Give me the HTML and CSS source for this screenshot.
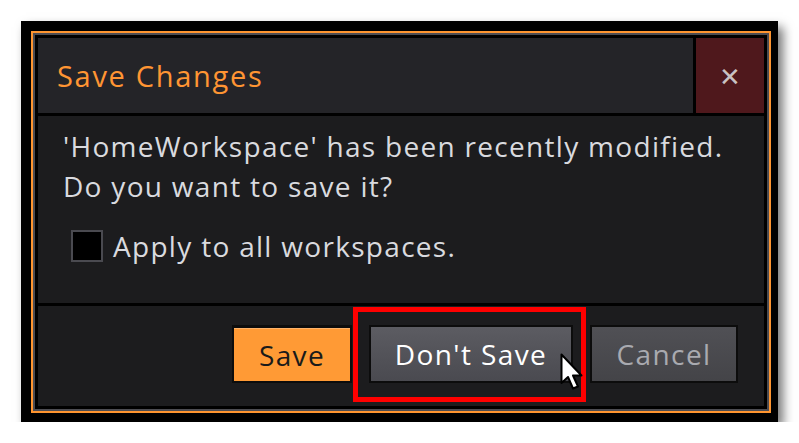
FILE: index.html
```html
<!DOCTYPE html>
<html lang="en">
<head>
    <meta charset="UTF-8">
    <title>Save Changes</title>
    <link rel="stylesheet" href="styles.css">
</head>
<body>
    <div class="frame">
        <div class="dialog">
            <div class="panels">
                <div class="header">
                    <div class="title">Save Changes</div>
                    <div class="close">&#x2715;</div>
                </div>
                <div class="content">
                    <p class="message">'HomeWorkspace' has been recently modified.<br>Do you want to save it?</p>
                    <label class="check">
                        <span class="box"></span>
                        <span>Apply to all workspaces.</span>
                    </label>
                </div>
                <div class="footer">
                    <button class="btn save">Save</button>
                    <button class="btn dont">Don't Save</button>
                    <button class="btn cancel">Cancel</button>
                    <div class="highlight"></div>
                    <svg class="cursor" width="24" height="38" viewBox="0 0 24 38">
                        <path d="M1.5 1.5 L1.5 30 L8 24 L13 35.5 L18 33.5 L13 22.5 L21.5 22.5 Z" fill="#fff" stroke="#000" stroke-width="2" stroke-linejoin="round"/>
                    </svg>
                </div>
            </div>
        </div>
    </div>
</body>
</html>
```

FILE: styles.css
```css
body {
    margin: 0;
    background: #fff;
    font-family: "Open Sans", Lato, sans-serif;
}
.frame {
    margin: 21px 0 0 21px;
    width: 757px;
    height: 401px;
    box-sizing: border-box;
    padding: 10px 7px 9px 10px;
    background: #000;
    box-shadow: 5px 6px 10px rgba(0, 0, 0, 0.55);
}
.dialog {
    height: 100%;
    box-sizing: border-box;
    border: 2px solid #ff9530;
}
.panels {
    height: 100%;
    box-sizing: border-box;
    border: 2px solid #4c4c52;
    padding: 3px;
    background: #000;
    display: flex;
    flex-direction: column;
    gap: 3px;
}
.header {
    height: 75px;
    display: flex;
    gap: 3px;
}
.title {
    flex: 1;
    background: #242428;
    color: #ff9533;
    font-size: 29px;
    letter-spacing: 1.7px;
    padding-left: 19px;
    display: flex;
    align-items: center;
}
.close {
    width: 68px;
    background: #4f181c;
    color: #c9c2c2;
    font-size: 26px;
    display: flex;
    align-items: center;
    justify-content: center;
}
.content {
    height: 187px;
    background: #1c1c1e;
    padding: 10px 0 0 25px;
    box-sizing: border-box;
    color: #d9dadf;
    font-size: 28px;
    letter-spacing: 1.3px;
}
.message {
    margin: 0;
    line-height: 40px;
}
.check {
    display: flex;
    align-items: center;
    gap: 10px;
    height: 36px;
    margin: 22px 0 0 8px;
}
.box {
    width: 28px;
    height: 28px;
    border: 2px solid #4a4a50;
    background: #000;
}
.footer {
    flex: 1;
    position: relative;
    background: #1c1c1e;
    display: flex;
    justify-content: flex-end;
    align-items: flex-start;
    gap: 17px;
    padding: 19px 26px 0 0;
}
.btn {
    height: 58px;
    border: 2px solid #0c0c0c;
    font-family: inherit;
    font-size: 28px;
    letter-spacing: 1.4px;
    padding: 0;
}
.save {
    width: 120px;
    background: #ff9a35;
    border-top: 3px solid #0c0c0c;
    box-shadow: inset 0 1px 0 #ffb36a;
    color: #1a1a1a;
}
.dont {
    width: 204px;
    background: linear-gradient(#5c5c62, #4a4a50);
    color: #fff;
}
.cancel {
    width: 148px;
    background: linear-gradient(#505055, #444448);
    color: #a9aab0;
}
.highlight {
    position: absolute;
    left: 315px;
    top: 1px;
    width: 223px;
    height: 85px;
    border: 5px solid #ff0000;
}
.cursor {
    position: absolute;
    left: 522px;
    top: 47px;
}
```
